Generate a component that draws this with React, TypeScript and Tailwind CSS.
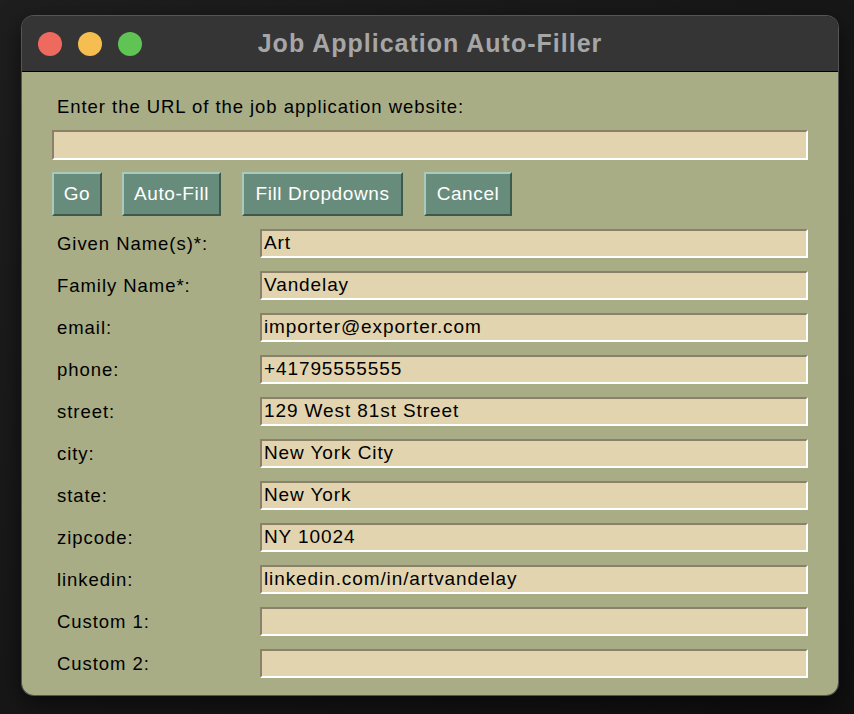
import React from 'react'

const fields: [string, string][] = [
  ['Given Name(s)*:', 'Art'],
  ['Family Name*:', 'Vandelay'],
  ['email:', 'importer@exporter.com'],
  ['phone:', '+41795555555'],
  ['street:', '129 West 81st Street'],
  ['city:', 'New York City'],
  ['state:', 'New York'],
  ['zipcode:', 'NY 10024'],
  ['linkedin:', 'linkedin.com/in/artvandelay'],
  ['Custom 1:', ''],
  ['Custom 2:', ''],
]

const buttons: [string, string][] = [
  ['Go', 'w-[50px]'],
  ['Auto-Fill', 'w-[99px] ml-[20px]'],
  ['Fill Dropdowns', 'w-[161px] ml-[21px]'],
  ['Cancel', 'w-[88px] ml-[21px]'],
]

function Field({ value, className }: { value: string; className?: string }) {
  return (
    <div
      className={`flex items-center bg-[#e2d4ae] border-2 border-t-[#8b816a] border-l-[#8b816a] border-b-white border-r-white pl-[2px] text-[19px] tracking-[0.9px] text-black whitespace-nowrap ${className ?? ''}`}
    >
      {value}
    </div>
  )
}

export default function App() {
  return (
    <div
      className="w-[854px] h-[714px] bg-gradient-to-br from-[#1e1e1e] to-[#101010] pl-[22px] pt-[16px]"
      style={{ fontFamily: '"Liberation Sans", Arial, sans-serif' }}
    >
      <div className="w-[816px] h-[679px] rounded-[12px] overflow-hidden flex flex-col shadow-[0_0_0_1px_#555,0_8px_24px_rgba(0,0,0,0.6)]">
        {/* title bar */}
        <div className="relative h-[56px] bg-[#353535] border-b border-black flex items-center shrink-0">
          <div className="flex gap-[16px] pl-[16px]">
            <span className="w-[24px] h-[24px] rounded-full bg-[#ee6a5f]" />
            <span className="w-[24px] h-[24px] rounded-full bg-[#f6be50]" />
            <span className="w-[24px] h-[24px] rounded-full bg-[#5fc454]" />
          </div>
          <div className="absolute inset-0 flex items-center justify-center text-[25px] tracking-[1px] font-bold text-[#a6a6a6]">
            Job Application Auto-Filler
          </div>
        </div>

        {/* content */}
        <div className="flex-1 bg-[#a8ad86] px-[30px] pt-[24px] text-[18.5px] tracking-[0.95px] text-black">
          <div className="pl-[5px] h-[22px] leading-[22px] whitespace-nowrap">Enter the URL of the job application website:</div>
          <Field value="" className="mt-[12px] h-[30px]" />
          <div className="mt-[12px] flex h-[44px]">
            {buttons.map(([label, w]) => (
              <div
                key={label}
                className={`${w} flex items-center justify-center bg-[#688c7c] border-2 border-t-[#a9c9bc] border-l-[#a9c9bc] border-b-[#3e5a4d] border-r-[#3e5a4d] text-white text-[19px] tracking-[0.6px] whitespace-nowrap`}
              >
                {label}
              </div>
            ))}
          </div>
          <div className="mt-[13px] flex flex-col gap-[13px]">
            {fields.map(([label, value]) => (
              <div key={label} className="flex items-center h-[29px]">
                <div className="w-[208px] pl-[5px] whitespace-nowrap">{label}</div>
                <Field value={value} className="flex-1 h-[29px]" />
              </div>
            ))}
          </div>
        </div>
      </div>
    </div>
  )
}
